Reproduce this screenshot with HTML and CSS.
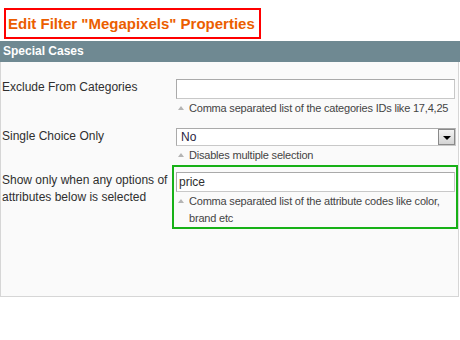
FILE: index.html
```html
<!DOCTYPE html>
<html>
<head>
<meta charset="utf-8">
<link rel="stylesheet" href="styles.css">
</head>
<body>
<div class="title-wrap"><h3 class="title">Edit Filter "Megapixels" Properties</h3></div>
<div class="head">Special Cases</div>
<div class="form">
  <div class="row r1">
    <div class="label">Exclude From Categories</div>
    <div class="value">
      <input class="text" type="text" value="">
      <p class="hint">Comma separated list of the categories IDs like 17,4,25</p>
    </div>
  </div>
  <div class="row r2">
    <div class="label">Single Choice Only</div>
    <div class="value">
      <div class="select"><span class="sel-text">No</span><span class="sel-btn"><span class="arrow"></span></span></div>
      <p class="hint">Disables multiple selection</p>
    </div>
  </div>
  <div class="row r3">
    <div class="label">Show only when any options of attributes below is selected</div>
    <div class="value marked">
      <input class="text" type="text" value="price">
      <p class="hint">Comma separated list of the attribute codes like color, brand etc</p>
    </div>
  </div>
</div>
</body>
</html>
```
FILE: styles.css
```css
html, body {
  margin: 0;
  padding: 0;
  background: #ffffff;
  font-family: "Liberation Sans", Arial, sans-serif;
  font-size: 12px;
  color: #2f2f2f;
}

.title-wrap {
  padding: 8px 0 0 4px;
  height: 31px;
}

.title {
  display: inline-block;
  margin: 0;
  border: 2px solid #ff0000;
  padding: 0 4px 0 2px;
  height: 27px;
  line-height: 27px;
  font-size: 15px;
  font-weight: bold;
  color: #eb5e00;
}

.head {
  margin-top: 2px;
  height: 21px;
  line-height: 21px;
  padding-left: 3px;
  background: #6f8992;
  color: #ffffff;
  font-weight: bold;
  font-size: 12px;
}

.form {
  width: 459px;
  box-sizing: border-box;
  border: 1px solid #d6d6d6;
  border-top: 0;
  background: #fafafa;
  padding: 17px 3px 67px 0;
}

.row {
  display: flex;
  align-items: flex-start;
}

.r2 { margin-top: 11px; }
.r3 { margin-top: 8px; }

.label {
  width: 174px;
  padding-left: 1px;
  line-height: 17px;
  flex: none;
}

.r3 .label { width: 172px; padding-right: 2px; }

.value {
  width: 279px;
  flex: none;
}

.marked {
  margin: -7px -3px 0 -4px;
  padding: 5px 1px 0 2px;
  border: 2px solid #17b117;
}

.text {
  display: block;
  box-sizing: border-box;
  width: 279px;
  height: 20px;
  margin: 0;
  padding: 0 2px;
  border: 1px solid;
  border-color: #aaaaaa #c8c8c8 #c8c8c8 #aaaaaa;
  background: #ffffff;
  font-family: "Liberation Sans", Arial, sans-serif;
  font-size: 12px;
  color: #2f2f2f;
  outline: none;
}

.select {
  display: flex;
  align-items: center;
  box-sizing: border-box;
  width: 280px;
  height: 18px;
  border: 1px solid;
  border-color: #aaaaaa #c8c8c8 #c8c8c8 #aaaaaa;
  background: #ffffff;
}

.sel-text {
  flex: 1;
  padding-left: 4px;
  line-height: 16px;
  color: #2a1f3f;
}

.sel-btn {
  display: flex;
  align-items: center;
  justify-content: center;
  box-sizing: border-box;
  width: 17px;
  height: 16px;
  border: 1px solid #8a8a8a;
  background: linear-gradient(#f4f4f4, #d4d4d4);
}

.arrow {
  width: 0;
  height: 0;
  border-left: 4px solid transparent;
  border-right: 4px solid transparent;
  border-top: 4px solid #000000;
  margin-top: 1px;
}

.hint {
  display: flex;
  margin: 1px 0 0 0;
  font-size: 11px;
  letter-spacing: -0.2px;
  line-height: 17px;
  color: #444444;
}

.hint::before {
  content: "";
  flex: none;
  width: 0;
  height: 0;
  margin: 6px 5px 0 2px;
  border-left: 3px solid transparent;
  border-right: 3px solid transparent;
  border-bottom: 4px solid #b4b4b4;
}
```
